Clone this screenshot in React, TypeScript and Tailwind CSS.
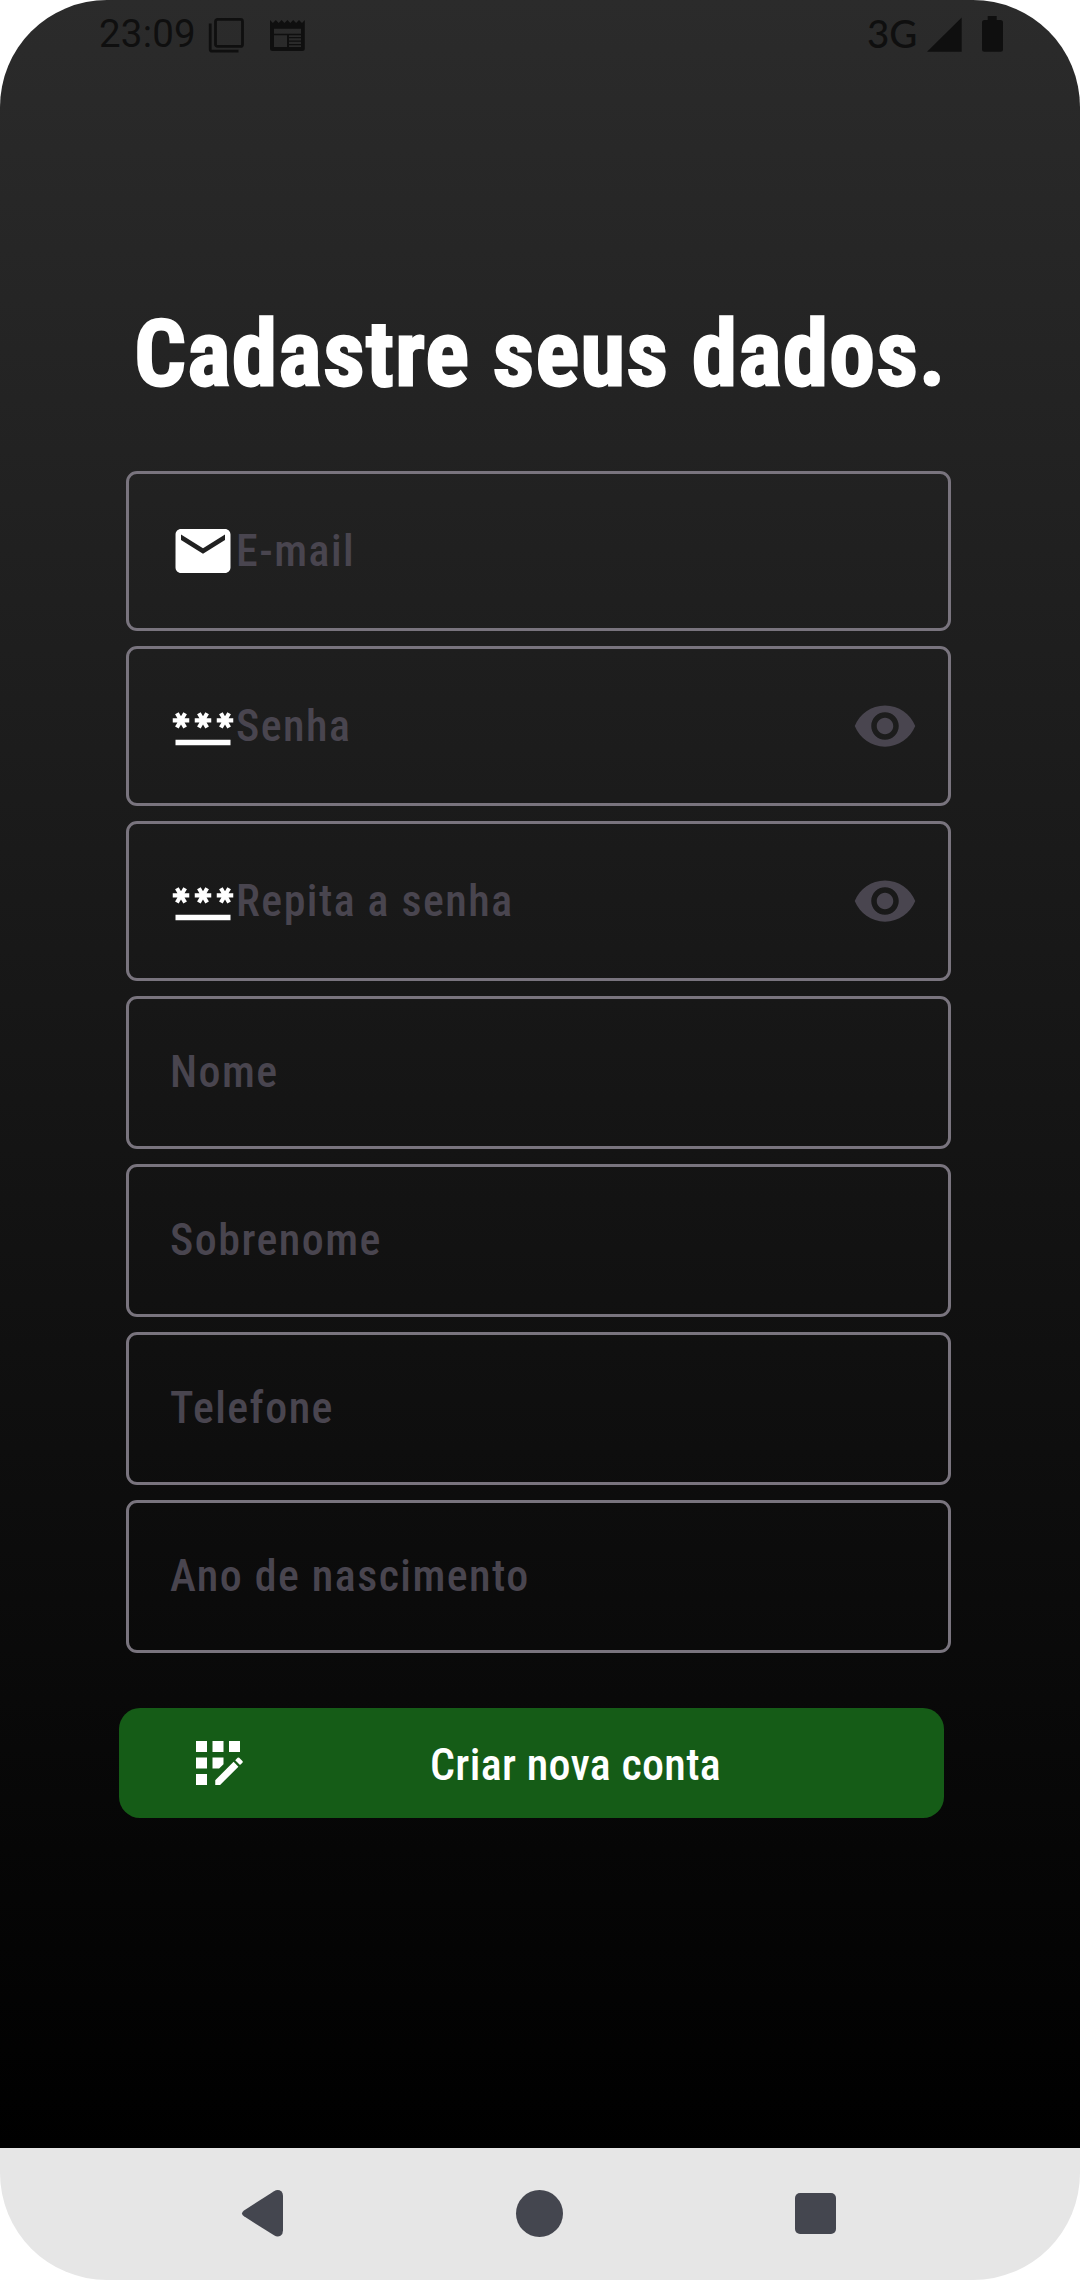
import type { ReactNode } from "react";
import { MdAppRegistration, MdEmail, MdPassword, MdVisibility } from "react-icons/md";

function StatusBar() {
  return (
    <header className="flex h-[68px] shrink-0 items-start font-['Roboto',sans-serif] text-[#0f0f0f] [font-stretch:100%]">
      <span className="ml-[99px] mt-[11px] w-[109px] whitespace-nowrap text-[38.5px] leading-[45px] tracking-[0.2px]">
        23:09
      </span>
      <svg className="mt-[17px] h-9 w-9" viewBox="0 0 36 36" fill="none" stroke="currentColor" strokeWidth="2.8">
        <rect x="7.500" y="2.400" width="27" height="27" rx="2" />
        <path d="M2.200 6.500V32.200q0 2 2 2H30.500" />
      </svg>
      <svg className="ml-[26px] mt-[17px] h-9 w-9" viewBox="0 0 36 36" fill="currentColor">
        <path
          fillRule="evenodd"
          d="M0 3L2.9 6 5.8 3 8.7 6 11.6 3 14.5 6 17.4 3 20.3 6 23.2 3 26.1 6 29 3 32 6 34.8 3V31.500Q34.800 34 32.300 34H2.500Q0 34 0 31.500ZM4 11.700V16.700H31V11.700ZM4 18.200V30H17V18.200ZM19 18.200V20H31V18.200ZM19 21.200V23.500H31V21.200ZM19 24.700V27H31V24.700ZM19 28.200V30H31V28.200Z"
        />
      </svg>
      <span className="ml-auto mt-[11px] w-[60px] whitespace-nowrap font-['Lato',sans-serif] text-[38.5px] font-medium leading-[45px]">
        3G
      </span>
      <svg className="mt-[17px] h-[35px] w-[35px]" viewBox="0 0 35 35" fill="currentColor">
        <path d="M0 34.700L34.700 0.500V34.700Z" />
      </svg>
      <svg className="ml-5 mr-[77px] mt-4 h-9 w-[21px]" viewBox="0 0 21 36" fill="currentColor">
        <path d="M5.700 0H14.700V4H18.500Q21 4 21 6.500V33.200Q21 35.700 18.500 35.700H2.500Q0 35.700 0 33.200V6.500Q0 4 2.500 4H5.700Z" />
      </svg>
    </header>
  );
}

function Field({ label, icon, reveal }: { label: string; icon?: ReactNode; reveal?: boolean }) {
  return (
    <div
      className={
        "flex items-center rounded-[11px] border-3 border-[#79747e] pl-[41px] text-[#49454f] " +
        (icon ? "h-40" : "h-[153px] pb-[2px]")
      }
    >
      {icon}
      <span className="whitespace-nowrap text-[44px] font-medium leading-[52px] tracking-[1.45px]">{label}</span>
      {reveal && <MdVisibility className="ml-auto mr-[30px] size-[66px]" />}
    </div>
  );
}

function NavBar() {
  return (
    <nav className="flex h-[132px] shrink-0 items-start bg-[#e6e6e6] pt-10 text-[#44464f]">
      <svg className="ml-[240px] h-[50px] w-[45px]" viewBox="0 0 45 50" fill="currentColor">
        <path d="M4 22.500L34 3.300Q38 0.800 41.500 3.500Q43 5 43 8V42.500Q43 46 40.500 47.800Q37.500 49.500 34 47.300L4 28.300Q0 25.500 4 22.500Z" />
      </svg>
      <div className="ml-[231px] mt-[2px] size-[47px] rounded-full bg-current" />
      <div className="ml-[232px] mt-[5px] size-[41px] rounded-[5px] bg-current" />
    </nav>
  );
}

export default function App() {
  return (
    <div className="h-[2280px] w-[1080px] bg-white">
      <div className="flex h-full flex-col overflow-hidden rounded-[107px] font-['Roboto_Condensed','Roboto',sans-serif] [font-stretch:75%]">
        <div className="flex flex-1 flex-col bg-linear-to-b/srgb from-[#2b2b2b] to-black">
          <StatusBar />
          <main className="ml-[126px] mt-[230px] w-[825px]">
            <h1 className="whitespace-nowrap pl-[4px] text-center text-[90.75px] font-semibold leading-[112px] tracking-[1.6px] text-white [-webkit-text-stroke:2.84px_white]">
              Cadastre seus dados.
            </h1>
            <form className="mt-[61px] flex flex-col gap-[15px]">
              <Field label="E-mail" icon={<MdEmail className="size-[66px] text-white" />} />
              <Field label="Senha" icon={<MdPassword className="size-[66px] text-white" />} reveal />
              <Field label="Repita a senha" icon={<MdPassword className="size-[66px] text-white" />} reveal />
              <Field label="Nome" />
              <Field label="Sobrenome" />
              <Field label="Telefone" />
              <Field label="Ano de nascimento" />
            </form>
            <button
              type="button"
              className="-ml-[7px] mt-[55px] flex h-[110px] w-[825px] items-center rounded-[21px] bg-[#155c17] pl-[66px] text-white"
            >
              <MdAppRegistration className="size-[66px]" />
              <span className="ml-[179px] mt-[3px] whitespace-nowrap text-[44px] font-medium leading-[52px] tracking-[0.32px]">
                Criar nova conta
              </span>
            </button>
          </main>
        </div>
        <NavBar />
      </div>
    </div>
  );
}
